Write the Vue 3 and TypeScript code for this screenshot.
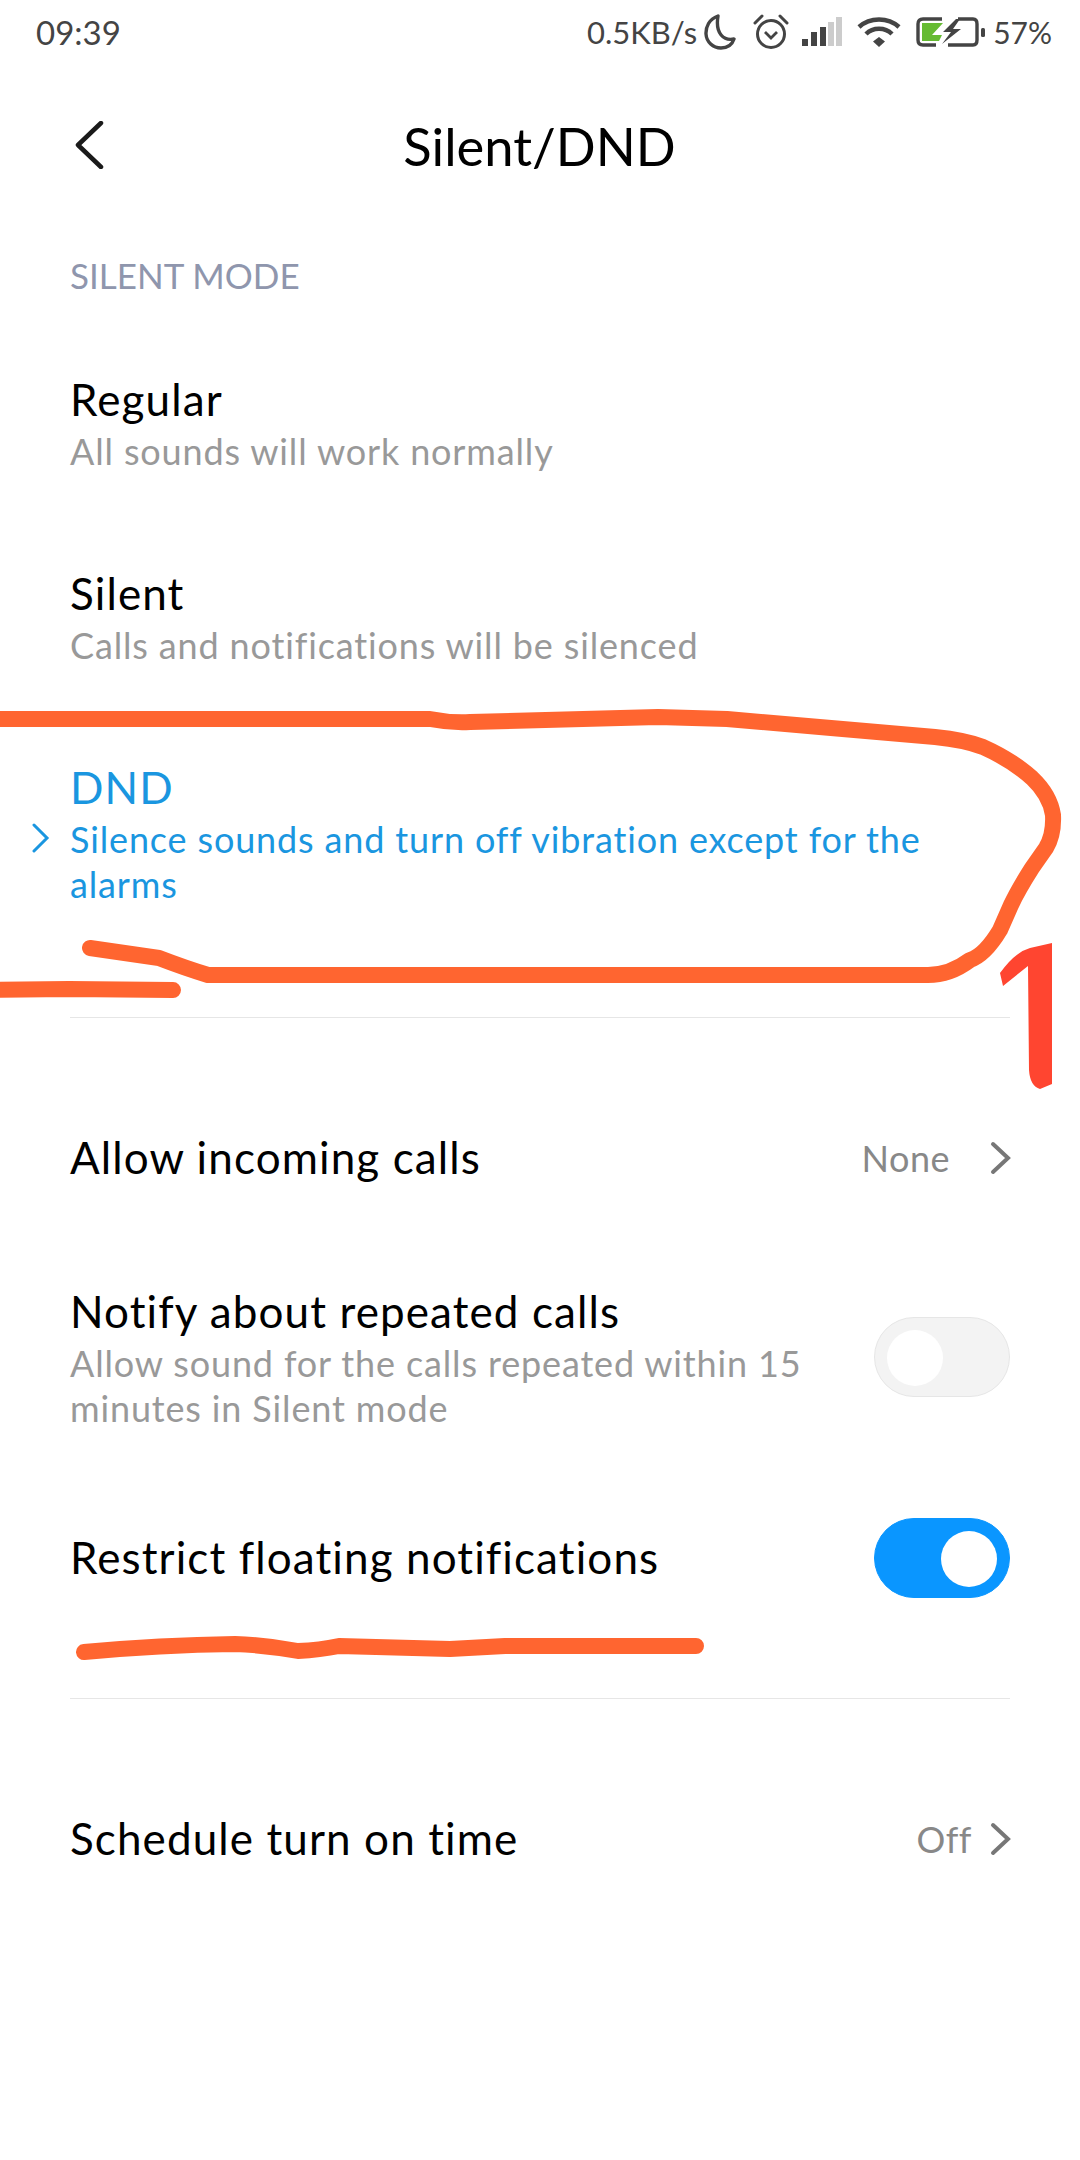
<template>
  <div class="screen">
    <div class="status-bar">
      <span class="clock">09:39</span>
      <div class="status-right">
        <span class="speed">0.5KB/s</span>
        <svg class="ic-moon" width="32" height="36" viewBox="0 0 32 36" fill="none" stroke="#444" stroke-width="3.4">
          <path d="M14 2 C5 5 1.700 13 2 20 C2.500 28 9 34 17 34 C23 34 28 31 30 25 C20 27 11 20 14 2 Z" stroke-linejoin="round" />
        </svg>
        <svg class="ic-alarm" width="36" height="36" viewBox="0 0 36 36" fill="none" stroke="#444" stroke-width="3">
          <circle cx="18" cy="20" r="13.500" />
          <path d="M12 18 L18 24 L24 18" stroke-width="2.800" />
          <path d="M2 9 L9 2 M34 9 L27 2" stroke-linecap="round" />
        </svg>
        <svg class="ic-signal" width="40" height="30" viewBox="0 0 40 30">
          <rect x="0" y="22" width="6" height="7" fill="#444" />
          <rect x="9" y="15" width="6" height="14" fill="#444" />
          <rect x="18" y="10" width="6" height="19" fill="#444" />
          <rect x="26" y="5" width="6" height="24" fill="#ccc" />
          <rect x="34" y="0" width="6" height="29" fill="#ccc" />
        </svg>
        <svg class="ic-wifi" width="44" height="30" viewBox="0 0 44 30" fill="none" stroke="#444" stroke-width="4.500">
          <path d="M2 10 C13 0 31 0 42 10" />
          <path d="M9 17 C16 10 28 10 35 17" />
          <path d="M22 20 L16 24.500 L22 30 L28 24.500 Z" fill="#444" stroke="none" />
        </svg>
        <svg class="ic-battery" width="70" height="30" viewBox="0 0 70 30">
          <path d="M26 2 H7 Q2 2 2 7 V23 Q2 28 7 28 H20 M42 2 H57 Q61 2 61 7 V23 Q61 28 57 28 H32" fill="none" stroke="#444" stroke-width="3.400" />
          <path d="M6 6 H27 L16 18 H26 L23 24 H6 Z" fill="#66bb33" />
          <path d="M40 2 L27 15 H35 L26 27 L45 12 H37 L44 2 Z" fill="#444" />
          <rect x="65" y="11" width="4" height="9" rx="1.500" fill="#444" />
        </svg>
        <span class="percent">57%</span>
      </div>
    </div>

    <div class="nav">
      <svg class="back" width="30" height="48" viewBox="0 0 30 48" fill="none" stroke="#1a1a1a" stroke-width="4.500" stroke-linecap="round" stroke-linejoin="round">
        <path d="M27 2 L4 24 L27 46" />
      </svg>
      <span class="nav-title">Silent/DND</span>
    </div>

    <div class="section-label">SILENT MODE</div>

    <div class="modes">
      <div v-for="m in modes" :key="m.title" class="mode" :class="{ active: m.active }">
        <svg v-if="m.active" class="mode-mark" width="18" height="30" viewBox="0 0 18 30" fill="none" stroke="#1a96e0" stroke-width="3" stroke-linecap="round">
          <path d="M2 2 L15 15 L2 28" />
        </svg>
        <div class="row-title">{{ m.title }}</div>
        <div class="row-sub">{{ m.sub }}</div>
      </div>
    </div>

    <div class="group">
      <div class="row">
        <div class="row-body"><div class="row-title">Allow incoming calls</div></div>
        <span class="value none">None</span>
        <svg class="arrow" width="22" height="34" viewBox="0 0 22 34" fill="none" stroke="#777" stroke-width="4" stroke-linecap="round">
          <path d="M3 3 L18 17 L3 31" />
        </svg>
      </div>
      <div class="row">
        <div class="row-body">
          <div class="row-title">Notify about repeated calls</div>
          <div class="row-sub">Allow sound for the calls repeated within 15 minutes in Silent mode</div>
        </div>
        <div class="toggle"><span class="knob"></span></div>
      </div>
      <div class="row restrict">
        <div class="row-body"><div class="row-title">Restrict floating notifications</div></div>
        <div class="toggle on"><span class="knob"></span></div>
      </div>
    </div>

    <div class="group">
      <div class="row">
        <div class="row-body"><div class="row-title">Schedule turn on time</div></div>
        <span class="value">Off</span>
        <svg class="arrow" width="22" height="34" viewBox="0 0 22 34" fill="none" stroke="#777" stroke-width="4" stroke-linecap="round">
          <path d="M3 3 L18 17 L3 31" />
        </svg>
      </div>
    </div>

    <!-- hand drawn marks on top of the screenshot -->
    <svg class="scribble" width="1080" height="2160" viewBox="0 0 1080 2160" fill="none" stroke="#ff6530" stroke-width="16" stroke-linecap="round" stroke-linejoin="round">
      <path d="M-10 719 L430 719 Q450 723 470 722 L658 717 L727 719 L831 728 L935 737 Q965 740 983 747 Q1012 760 1032 778 Q1050 795 1053 815 Q1054 835 1046 848 L1032 868 Q1018 890 1011 905 L1000 930 Q985 955 970 960 Q950 975 928 975 L208 975 Q185 968 159 958 L90 948" />
      <path d="M-10 990 L69 989 L173 990" />
      <path d="M84 1652 Q160 1645 235 1644 Q265 1645 298 1651 Q320 1650 339 1646 L450 1649 L505 1646 L696 1646" />
      <path d="M1000 973 Q1015 952 1030 948 L1052 943 L1052 1084 L1040 1089 Q1030 1086 1029 1070 L1028 966 L1003 986 Z" fill="#ff4530" stroke="none" />
    </svg>
  </div>
</template>

<script setup lang="ts">
type Mode = { title: string; sub: string; active?: boolean };

const modes: Mode[] = [
  { title: "Regular", sub: "All sounds will work normally" },
  { title: "Silent", sub: "Calls and notifications will be silenced" },
  { title: "DND", sub: "Silence sounds and turn off vibration except for the alarms", active: true },
];
</script>

<style>
html, body {
  margin: 0;
  background: #fff;
}
</style>

<style scoped>
.screen {
  position: relative;
  width: 1080px;
  height: 2160px;
  overflow: hidden;
  background: #fff;
  font-family: Lato, "Noto Sans", sans-serif;
  color: #000;
}
.status-bar {
  height: 64px;
  padding: 0 28px 0 36px;
  display: flex;
  align-items: center;
  justify-content: space-between;
  box-sizing: border-box;
  font-size: 31px;
  color: #444;
}
.clock {
  font-size: 33px;
}
.percent {
  font-size: 30px;
}
.status-right {
  display: flex;
  align-items: center;
}
.speed { margin-right: 7px; }
.ic-alarm { margin-left: 17px; }
.ic-signal { margin-left: 13px; }
.ic-wifi { margin-left: 15px; }
.ic-battery { margin-left: 15px; margin-right: 7px; }

.nav {
  position: relative;
  height: 162px;
  display: flex;
  align-items: center;
  justify-content: center;
}
.back {
  position: absolute;
  left: 74px;
  top: 57px;
}
.nav-title {
  font-size: 52.500px;
  margin-left: -1px;
}
.section-label {
  height: 100px;
  line-height: 98px;
  padding-left: 70px;
  font-size: 35px;
  color: #8f96ad;
}
.modes {
  padding-bottom: 65px;
}
.mode {
  position: relative;
  padding: 45px 70px 46px;
}
.mode.active {
  padding-bottom: 45px;
}
.mode-mark {
  position: absolute;
  left: 32px;
  top: 109px;
}
.row-title {
  font-size: 44px;
  letter-spacing: 1.100px;
  line-height: 58px;
  margin: -1px 0 1px;
}
.row-sub {
  font-size: 36px;
  letter-spacing: 0.850px;
  line-height: 45px;
  color: #999;
}
.mode.active .row-title,
.mode.active .row-sub {
  color: #1a96e0;
}
.group {
  margin: 0 70px;
  padding: 63px 0;
  border-top: 1px solid #e6e6e6;
}
.row {
  display: flex;
  align-items: center;
  padding: 48px 0;
}
.row.restrict {
  margin-top: 2px;
}
.row-body {
  flex: 1;
  min-width: 0;
  padding-right: 50px;
}
.value {
  font-size: 36px;
  letter-spacing: 0.500px;
  color: #888;
}
.value.none {
  margin-right: 40px;
}
.arrow {
  margin-left: 18px;
  margin-right: -2px;
}
.none + .arrow {
  margin-left: 0;
}
.toggle {
  flex: none;
  width: 136px;
  height: 80px;
  margin: -11px 0;
  border-radius: 40px;
  box-sizing: border-box;
  padding: 12px;
  background: #f3f3f3;
  border: 1px solid #e6e6e6;
}
.knob {
  display: block;
  width: 56px;
  height: 56px;
  border-radius: 50%;
  background: #fff;
}
.toggle.on {
  background: #0a96ff;
  border-color: #0a96ff;
}
.toggle.on .knob {
  margin-left: auto;
}
.scribble {
  position: absolute;
  left: 0;
  top: 0;
}
</style>
